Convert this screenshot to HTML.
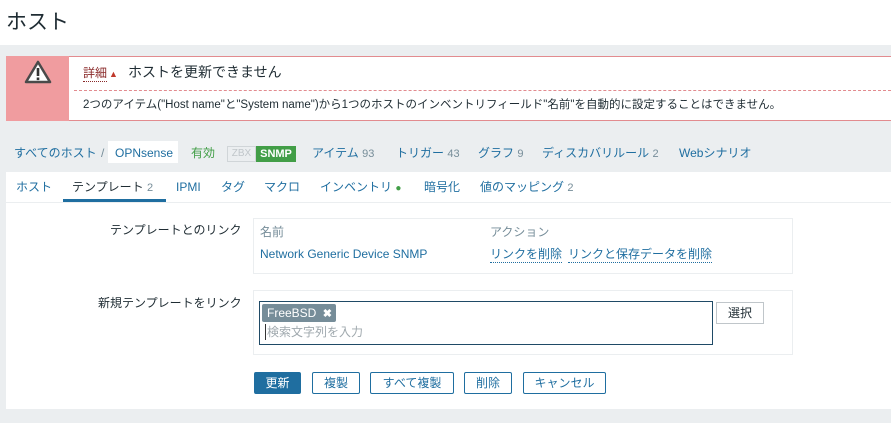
<!DOCTYPE html><html><head><meta charset="utf-8"><style>
body{margin:0;width:891px;height:423px;background:#ebeef0;font-family:"Liberation Sans","Noto Sans CJK JP",sans-serif;position:relative;overflow:hidden;font-size:12px;color:#1f2c33}
.a{position:absolute;white-space:nowrap;line-height:16px}
.l{color:#1f6ea0}
.g{color:#768d99;font-size:11px}
.n{font-size:12px;top:145px}
.t{font-size:12px;top:179px}
.btn{position:absolute;top:372px;height:22px;border:1px solid #1f6ea0;border-radius:2px;background:#fff;color:#1f6ea0;box-sizing:border-box;text-align:center;line-height:20px;font-size:12px}
</style></head><body>
<div class="a" style="left:0;top:0;width:891px;height:45px;background:#fff"></div>
<div class="a" style="left:6px;top:10px;font-size:21px;line-height:26px;color:#1f2c33">ホスト</div>
<div class="a" style="left:6px;top:56px;width:885px;height:65px;background:#fff;border:1px solid #e28b8f;border-right:none;box-sizing:border-box"></div>
<div class="a" style="left:6px;top:56px;width:63px;height:65px;background:#f09c9f"></div>
<svg class="a" style="left:24px;top:60px" width="28" height="24" viewBox="0 0 28 24"><path d="M14 2 L26 22 L2 22 Z" fill="#fff" stroke="#4a4a4a" stroke-width="2.5" stroke-linejoin="round"/><rect x="12.7" y="8" width="2.6" height="8" fill="#333"/><rect x="12.7" y="17.5" width="2.6" height="2.6" fill="#333"/></svg>
<div class="a" style="left:83px;top:65px;font-size:12px;color:#8a2a2a;border-bottom:1px dotted #8a2a2a">詳細</div>
<div class="a" style="left:109px;top:66px;font-size:9px;color:#c0392b">▲</div>
<div class="a" style="left:128px;top:64px;font-size:14px">ホストを更新できません</div>
<div class="a" style="left:74px;top:90px;width:817px;border-top:1px dashed #e28b8f"></div>
<div class="a" style="left:83px;top:97px;font-size:11.5px">2つのアイテム("Host name"と"System name")から1つのホストのインベントリフィールド"名前"を自動的に設定することはできません。</div>
<div class="a l n" style="left:14px">すべてのホスト</div>
<div class="a n" style="left:101px;color:#768d99">/</div>
<div class="a" style="left:108px;top:141px;width:70px;height:22px;background:#fff"></div>
<div class="a l n" style="left:115px">OPNsense</div>
<div class="a n" style="left:191px;color:#429e47">有効</div>
<div class="a" style="left:227px;top:146px;width:29px;height:16px;border:1px solid #d0d5d8;box-sizing:border-box;color:#c0c6ca;font-size:10px;text-align:center;line-height:14px">ZBX</div>
<div class="a" style="left:256px;top:146px;width:40px;height:16px;background:#429e47;color:#fff;font-size:11px;font-weight:bold;text-align:center;line-height:16px">SNMP</div>
<div class="a l n" style="left:312px">アイテム <span class="g">93</span></div>
<div class="a l n" style="left:396px">トリガー <span class="g">43</span></div>
<div class="a l n" style="left:478px">グラフ <span class="g">9</span></div>
<div class="a l n" style="left:542px">ディスカバリルール <span class="g">2</span></div>
<div class="a l n" style="left:679px">Webシナリオ</div>
<div class="a" style="left:6px;top:172px;width:885px;height:237px;background:#fff"></div>
<div class="a" style="left:6px;top:202px;width:885px;border-top:1px solid #ebeef0"></div>
<div class="a l t" style="left:16px">ホスト</div>
<div class="a t" style="left:72px">テンプレート <span class="g">2</span></div>
<div class="a" style="left:63px;top:199px;width:103px;height:3px;background:#1f6ea0"></div>
<div class="a l t" style="left:176px">IPMI</div>
<div class="a l t" style="left:221px">タグ</div>
<div class="a l t" style="left:264px">マクロ</div>
<div class="a l t" style="left:320px">インベントリ <span style="color:#429e47;font-size:10px">●</span></div>
<div class="a l t" style="left:424px">暗号化</div>
<div class="a l t" style="left:480px">値のマッピング <span class="g">2</span></div>
<div class="a" style="left:110px;top:222px;font-size:12px">テンプレートとのリンク</div>
<div class="a" style="left:253px;top:218px;width:540px;height:56px;border:1px solid #ebeef0;box-sizing:border-box"></div>
<div class="a" style="left:260px;top:224px;color:#768d99">名前</div>
<div class="a" style="left:490px;top:224px;color:#768d99">アクション</div>
<div class="a l" style="left:260px;top:246px">Network Generic Device SNMP</div>
<div class="a l" style="left:490px;top:246px;border-bottom:1px dotted #1f6ea0">リンクを削除</div>
<div class="a l" style="left:568px;top:246px;border-bottom:1px dotted #1f6ea0">リンクと保存データを削除</div>
<div class="a" style="left:98px;top:295px;font-size:12px">新規テンプレートをリンク</div>
<div class="a" style="left:253px;top:290px;width:540px;height:65px;border:1px solid #ebeef0;box-sizing:border-box"></div>
<div class="a" style="left:259px;top:301px;width:454px;height:44px;border:1px solid #1f4a66;box-sizing:border-box"></div>
<div class="a" style="left:262px;top:304px;width:74px;height:18px;background:#768d99;border-radius:2px;color:#fff;font-size:12px;line-height:18px;padding-left:5px;box-sizing:border-box">FreeBSD <b style="margin-left:3px;font-size:11px">✖</b></div>
<div class="a" style="left:265px;top:324px;color:#a0a9ae;font-size:12px;border-left:1px solid #333;padding-left:1px">検索文字列を入力</div>
<div class="a" style="left:716px;top:302px;width:48px;height:22px;border:1px solid #c0c6ca;box-sizing:border-box;text-align:center;line-height:20px">選択</div>
<div class="btn" style="left:254px;width:47px;background:#1f6ea0;color:#fff">更新</div>
<div class="btn" style="left:312px;width:48px">複製</div>
<div class="btn" style="left:370px;width:84px">すべて複製</div>
<div class="btn" style="left:464px;width:48px">削除</div>
<div class="btn" style="left:523px;width:83px">キャンセル</div>
</body></html>
